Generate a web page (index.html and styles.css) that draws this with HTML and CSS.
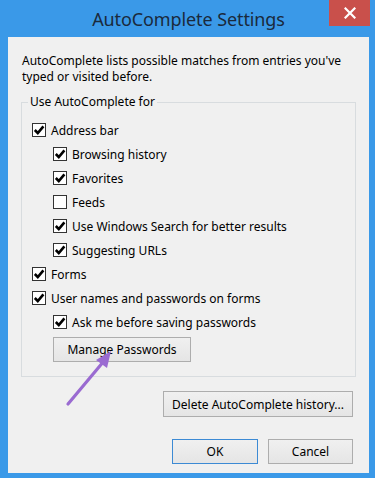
FILE: index.html
```html
<!DOCTYPE html>
<html lang="en">
<head>
<meta charset="UTF-8">
<meta name="viewport" content="width=device-width, initial-scale=1.0">
<title>AutoComplete Settings</title>
<link rel="stylesheet" href="styles.css">
</head>
<body>
<div class="window">
<div class="titlebar">
<span class="title">AutoComplete Settings</span>
<div class="close">
<svg width="12" height="12" viewBox="0 0 12 12"><path d="M1.5 1.5 L10.5 10.5 M10.5 1.5 L1.5 10.5" stroke="#fff" stroke-width="2.2" stroke-linecap="square"/></svg>
</div>
</div>
<div class="client">
<p class="desc">AutoComplete lists possible matches from entries you've typed or visited before.</p>
<fieldset class="group">
<legend>Use AutoComplete for</legend>
<!-- Address bar options -->
<div class="option"><span class="box checked"></span>Address bar</div>
<div class="option sub"><span class="box checked"></span>Browsing history</div>
<div class="option sub"><span class="box checked"></span>Favorites</div>
<div class="option sub"><span class="box"></span>Feeds</div>
<div class="option sub"><span class="box checked"></span>Use Windows Search for better results</div>
<div class="option sub"><span class="box checked"></span>Suggesting URLs</div>
<!-- Forms -->
<div class="option"><span class="box checked"></span>Forms</div>
<div class="option"><span class="box checked"></span>User names and passwords on forms</div>
<div class="option sub"><span class="box checked"></span>Ask me before saving passwords</div>
<button class="btn manage">Manage Passwords</button>
</fieldset>
<div class="history-row">
<button class="btn history">Delete AutoComplete history...</button>
</div>
<div class="actions">
<button class="btn ok">OK</button>
<button class="btn cancel">Cancel</button>
</div>
</div>
<!-- Purple arrow pointing at Manage Passwords -->
<svg class="arrow" width="375" height="478" viewBox="0 0 375 478">
<line x1="68" y1="404" x2="104" y2="361" stroke="#9a6bd1" stroke-width="3.2" stroke-linecap="round"/>
<polygon points="111,351 96,360 107,368" fill="#9a6bd1"/>
</svg>
</div>
</body>
</html>
```

FILE: styles.css
```css
body {
    margin: 0;
    padding: 0;
    font-family: "Noto Sans", "Open Sans", sans-serif;
    font-size: 12px;
    color: #000;
}
.window {
    position: relative;
    width: 375px;
    height: 478px;
    box-sizing: border-box;
    background-color: #3a99e8;
    padding: 0 6px 5px 8px;
    display: flex;
    flex-direction: column;
}
.titlebar {
    height: 37px;
    flex: none;
    display: flex;
    align-items: center;
    justify-content: center;
}
.title {
    font-size: 18px;
    color: #1a2a3c;
    letter-spacing: -0.1px;
}
.close {
    position: absolute;
    top: 0;
    right: 5px;
    width: 41px;
    height: 26px;
    background-color: #c9504b;
    display: flex;
    align-items: center;
    justify-content: center;
}
.client {
    flex: 1;
    background-color: #f0f0f0;
    padding: 16px 14px 0 14px;
}
.desc {
    margin: 0;
    line-height: 16px;
}
/* Group box */
.group {
    margin: 9px -1px 0 -1px;
    padding: 8px 0 14px 10px;
    border: 1px solid #d8dcdf;
}
.group legend {
    margin-left: -4px;
    padding: 0 2px;
    line-height: 16px;
}
.option {
    height: 24px;
    display: flex;
    align-items: center;
    gap: 5px;
}
.option.sub {
    margin-left: 21px;
}
.box {
    width: 12px;
    height: 12px;
    border: 1px solid #333;
    background-color: #fff;
    flex: none;
}
.box.checked {
    background-image: url("data:image/svg+xml,%3Csvg xmlns='http://www.w3.org/2000/svg' width='12' height='12' viewBox='0 0 12 12'%3E%3Cpath d='M1.8 6 L4.8 9 L10.4 2.4' fill='none' stroke='%23000' stroke-width='2.6'/%3E%3C/svg%3E");
}
/* Buttons */
.btn {
    font-family: inherit;
    font-size: 12px;
    color: #000;
    height: 25px;
    padding: 0;
    background: linear-gradient(#f0f0f0, #e5e5e5);
    border: 1px solid #adadad;
    border-radius: 0;
}
.manage {
    display: block;
    margin: 3px 0 0 21px;
    width: 138px;
}
.history-row {
    display: flex;
    justify-content: flex-end;
    margin: 14px 2px 0 0;
}
.history {
    width: 190px;
    height: 26px;
}
.actions {
    display: flex;
    justify-content: flex-end;
    gap: 10px;
    margin: 22px 2px 0 0;
}
.ok {
    width: 86px;
    border-color: #3c8ad4;
}
.cancel {
    width: 85px;
}
.arrow {
    position: absolute;
    top: 0;
    left: 0;
    pointer-events: none;
}
```
